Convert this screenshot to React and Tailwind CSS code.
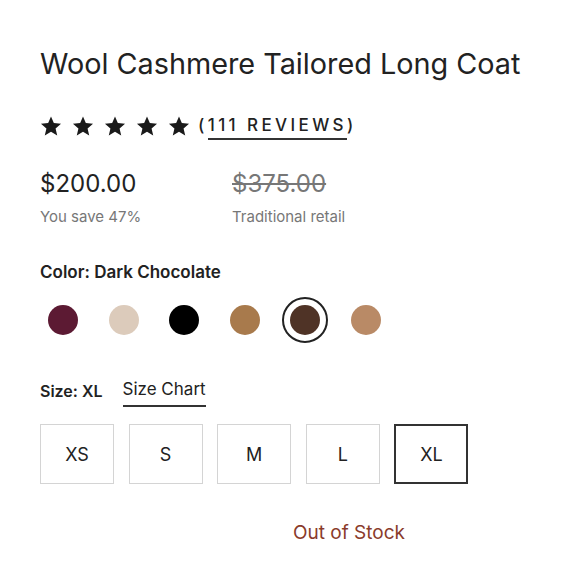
import React from "react";

const Star = () => (
  <svg width="22" height="22" viewBox="0 0 24 24" fill="#1a1a1a">
    <path d="M12 1.5l3.09 7.26 7.86.68-5.96 5.17 1.79 7.69L12 18.2l-6.78 4.1 1.79-7.69L1.05 9.44l7.86-.68z" />
  </svg>
);

const swatches = ["#5c1a33", "#dccbbb", "#000000", "#a87a4c", "#4f3326", "#b98a66"];
const sizes = ["XS", "S", "M", "L", "XL"];

export default function App() {
  return (
    <div className="w-[580px] h-[580px] bg-white text-[#222]" style={{ fontFamily: "Inter, 'Liberation Sans', sans-serif" }}>
      <div className="pl-[40px] pt-[46px]">
        <h1 className="text-[28.8px] leading-[36px] font-normal text-[#222]">Wool Cashmere Tailored Long Coat</h1>
        <div className="flex items-center mt-[31px] h-[26px]">
          <div className="flex gap-[10px]">
            <Star /><Star /><Star /><Star /><Star />
          </div>
          <div className="ml-[8px] text-[17px] font-medium tracking-[3.4px] text-[#222]">
            (<span className="border-b-2 border-[#333] pb-[3px]">111 REVIEWS</span>)
          </div>
        </div>
        <div className="flex mt-[30px]">
          <div className="w-[192px]">
            <div className="text-[24px] leading-[30px] text-[#222]">$200.00</div>
            <div className="text-[15px] leading-[20px] mt-[8px] text-[#777]">You save 47%</div>
          </div>
          <div>
            <div className="text-[24px] leading-[30px] text-[#777] line-through decoration-[#777]">$375.00</div>
            <div className="text-[15px] leading-[20px] mt-[8px] text-[#777]">Traditional retail</div>
          </div>
        </div>
        <div className="mt-[34px] text-[17px] leading-[22px] font-semibold text-[#222]">Color: Dark Chocolate</div>
        <div className="flex gap-[14.6px] mt-[14px]">
          {swatches.map((c, i) => (
            <div key={i} className={`w-[46px] h-[46px] rounded-full flex items-center justify-center ${i === 4 ? "border-2 border-[#222]" : ""}`}>
              <div className="w-[30px] h-[30px] rounded-full" style={{ backgroundColor: c }} />
            </div>
          ))}
        </div>
        <div className="flex items-center mt-[36px] h-[24px]">
          <span className="text-[16px] font-semibold text-[#222]">Size: XL</span>
          <span className="ml-[20px] text-[17px] text-[#222] border-b-2 border-[#333] pb-[2px] mt-[2px]">Size Chart</span>
        </div>
        <div className="flex gap-[14.6px] mt-[21px]">
          {sizes.map((s) => (
            <div key={s} className={`w-[74px] h-[60px] flex items-center justify-center text-[18px] text-[#222] ${s === "XL" ? "border-2 border-[#333]" : "border border-[#d4d4d4]"}`}>{s}</div>
          ))}
        </div>
        <div className="mt-[36px] pl-[253px] text-[19px] leading-[26px] text-[#8a3b2b]">Out of Stock</div>
      </div>
    </div>
  );
}
